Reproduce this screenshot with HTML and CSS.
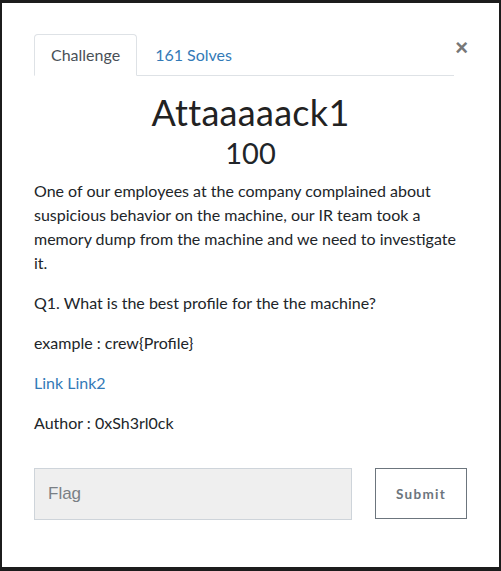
FILE: index.html
```html
<!DOCTYPE html>
<html>
<head>
<meta charset="utf-8">
<link rel="stylesheet" href="styles.css">
</head>
<body>
<div class="modal">
  <div class="header">
    <ul class="tabs">
      <li class="tab active">Challenge</li>
      <li class="tab link">161 Solves</li>
    </ul>
    <span class="close">&times;</span>
  </div>
  <h2 class="title">Attaaaaack1</h2>
  <h3 class="value">100</h3>
  <div class="desc">
    <p>One of our employees at the company complained about suspicious behavior on the machine, our IR team took a memory dump from the machine and we need to investigate it.</p>
    <p>Q1. What is the best profile for the the machine?</p>
    <p>example : crew{Profile}</p>
    <p><a class="lnk">Link</a> <a class="lnk">Link2</a></p>
    <p>Author : 0xSh3rl0ck</p>
  </div>
  <div class="form">
    <div class="input">Flag</div>
    <div class="btn">Submit</div>
  </div>
</div>
</body>
</html>
```
FILE: styles.css
```css
html, body { margin: 0; padding: 0; }
body {
  background: #1c1c1c;
  width: 501px;
  height: 571px;
  overflow: hidden;
  font-family: Lato, "Noto Sans", sans-serif;
  color: #212529;
}
.modal {
  margin: 3px 2px 0 2px;
  width: 497px;
  height: 564px;
  background: #fff;
  box-sizing: border-box;
  padding: 31px 32px 0 32px;
}
.header {
  display: flex;
  align-items: flex-start;
}
.tabs {
  list-style: none;
  margin: 0;
  padding: 0;
  display: flex;
  width: 420px;
  border-bottom: 1px solid #dee2e6;
}
.tab {
  font-size: 16px;
  line-height: 24px;
  padding: 8px 16px;
  margin-bottom: -1px;
  border: 1px solid transparent;
  border-radius: 4px 4px 0 0;
}
.tab.active {
  border-color: #dee2e6 #dee2e6 #fff;
  color: #495057;
  background: #fff;
}
.tab.link { color: #337ab7; padding-left: 17px; }
.close {
  margin-left: auto;
  font-family: "Liberation Sans", Arial, sans-serif;
  font-weight: bold;
  font-size: 22px;
  line-height: 22px;
  color: #777;
  margin-top: 3px;
  margin-right: -1px;
}
.title {
  margin: 15px 0 0 0;
  text-align: center;
  font-weight: 400;
  font-size: 36px;
  line-height: 43px;
  letter-spacing: 0.3px;
  color: #222;
}
.value {
  margin: 2px 0 0 0;
  text-align: center;
  font-weight: 400;
  font-size: 29px;
  line-height: 34px;
}
.desc {
  margin-top: 9px;
  font-size: 16px;
  line-height: 24px;
}
.desc p { margin: 0 0 16px 0; }
.lnk { color: #337ab7; }
.form {
  margin-top: 33px;
  display: flex;
  justify-content: space-between;
}
.input {
  box-sizing: border-box;
  width: 318px;
  height: 52px;
  background: #efefef;
  border: 1px solid #ced4da;
  font-family: "Liberation Sans", Arial, sans-serif;
  font-size: 17px;
  color: #7a7f85;
  padding: 14px 13px;
  line-height: 22px;
}
.btn {
  box-sizing: border-box;
  width: 92px;
  height: 51px;
  border: 1px solid #6c757d;
  color: #6c757d;
  font-weight: bold;
  font-size: 13.5px;
  letter-spacing: 1.3px;
  display: flex;
  align-items: center;
  justify-content: center;
}
```
